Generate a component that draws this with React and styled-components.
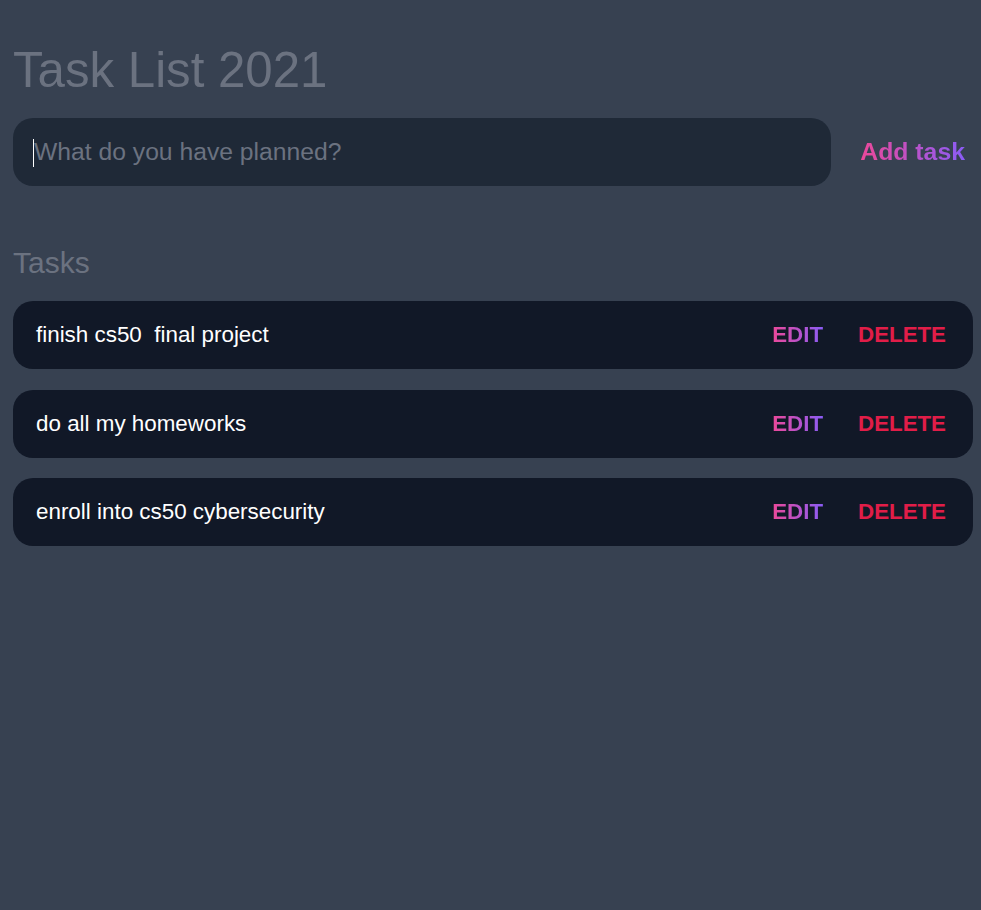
import React from "react";
import styled, { createGlobalStyle } from "styled-components";

const Global = createGlobalStyle`
  html, body { margin: 0; padding: 0; background: #374151; }
  body { font-family: "Liberation Sans", Arial, sans-serif; min-height: 910px; }
  * { box-sizing: border-box; }
`;

const Page = styled.main`
  padding: 46px 8px 40px 13px;
  display: flex;
  flex-direction: column;
`;

const Title = styled.h1`
  margin: 0;
  font-size: 49.2px;
  line-height: 48px;
  font-weight: 400;
  color: #6b7280;
`;

const Form = styled.form`
  display: flex;
  align-items: center;
  margin: 24px -8px 0 0;
`;

const Field = styled.div`
  position: relative;
  flex: 1;
  display: flex;
`;

const Input = styled.input`
  flex: 1;
  height: 68px;
  border: none;
  outline: none;
  border-radius: 20px;
  background: #1f2937;
  color: #f9fafb;
  caret-color: #ffffff;
  padding: 0 20px 0 21px;
  font-family: inherit;
  font-size: 24.7px;
  &::placeholder { color: #6b7280; }
`;

const Caret = styled.span`
  position: absolute;
  left: 20px;
  top: 21px;
  width: 1px;
  height: 28px;
  background: #ffffff;
  pointer-events: none;
`;

const GradientText = styled.span`
  background: linear-gradient(90deg, #ec4899, #8b5cf6);
  -webkit-background-clip: text;
  background-clip: text;
  color: transparent;
`;

const AddButton = styled.button`
  border: none;
  background: transparent;
  padding: 0 16px 0 29px;
  font-family: inherit;
  font-size: 24.8px;
  font-weight: 700;
  cursor: pointer;
`;

const SectionTitle = styled.h2`
  margin: 59px 0 20px;
  font-size: 30px;
  line-height: 36px;
  font-weight: 400;
  color: #6b7280;
`;

const List = styled.ul`
  list-style: none;
  margin: 0;
  padding: 0;
  display: flex;
  flex-direction: column;
  gap: 20.5px;
`;

const Row = styled.li`
  display: flex;
  align-items: center;
  height: 68px;
  padding: 0 27px 0 23px;
  border-radius: 20px;
  background: #111827;
`;

const TaskText = styled.span`
  flex: 1;
  color: #ffffff;
  font-size: 22.4px;
  white-space: pre;
`;

const Action = styled.button`
  border: none;
  background: transparent;
  padding: 0;
  margin-left: ${(p) => p.$gap}px;
  font-family: inherit;
  font-size: 22.3px;
  font-weight: 700;
  color: ${(p) => p.$color || "inherit"};
  cursor: pointer;
`;

const tasks = [
  "finish cs50  final project",
  "do all my homeworks",
  "enroll into cs50 cybersecurity",
];

export default function App() {
  return (
    <>
      <Global />
      <Page>
        <Title>Task List 2021</Title>
        <Form onSubmit={(e) => e.preventDefault()}>
          <Field>
            <Input placeholder="What do you have planned?" />
            <Caret />
          </Field>
          <AddButton type="submit">
            <GradientText>Add task</GradientText>
          </AddButton>
        </Form>
        <SectionTitle>Tasks</SectionTitle>
        <List>
          {tasks.map((t) => (
            <Row key={t}>
              <TaskText>{t}</TaskText>
              <Action $gap={0}>
                <GradientText>EDIT</GradientText>
              </Action>
              <Action $gap={35} $color="#e11d48">DELETE</Action>
            </Row>
          ))}
        </List>
      </Page>
    </>
  );
}
